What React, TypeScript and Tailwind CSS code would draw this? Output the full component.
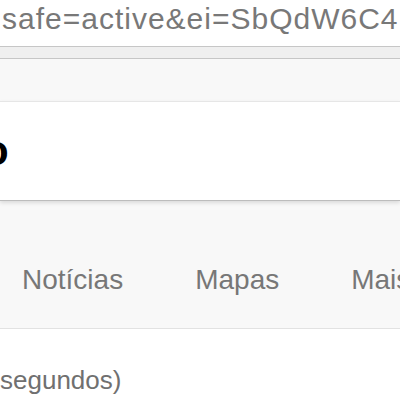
export default function App() {
  return (
    <div className="w-[400px] h-[400px] overflow-hidden bg-white font-['Liberation_Sans',Arial,sans-serif]">
      <div className="h-[46px] bg-white overflow-hidden whitespace-nowrap pl-[2px] pt-[1px] text-[30px] leading-[36px] tracking-[1px] text-[#787878]">
        safe=active&amp;ei=SbQdW6C4Lo
      </div>
      <div className="h-[13px] border-t border-b border-[#c6c6c6] bg-[#efefef]" />
      <div className="bg-[#f8f8f8] pt-[42px]">
        <div className="h-[100px] bg-white border-t border-[#e6e6e6] border-b border-b-[#bcbcbc] shadow-[0_2px_4px_rgba(0,0,0,0.12)] overflow-hidden flex items-center">
          <span className="ml-[-17px] text-[42px] leading-none font-bold text-black">o</span>
        </div>
        <div className="h-[127px] flex items-center gap-[72px] pl-[22px] pt-[30px] whitespace-nowrap text-[28px] text-[#777777]">
          <span>Notícias</span>
          <span>Mapas</span>
          <span>Mais</span>
        </div>
      </div>
      <div className="border-t border-[#e2e2e2] pt-[36px] whitespace-nowrap text-[26px] leading-[30px] text-[#707070]">
        segundos)
      </div>
    </div>
  );
}
